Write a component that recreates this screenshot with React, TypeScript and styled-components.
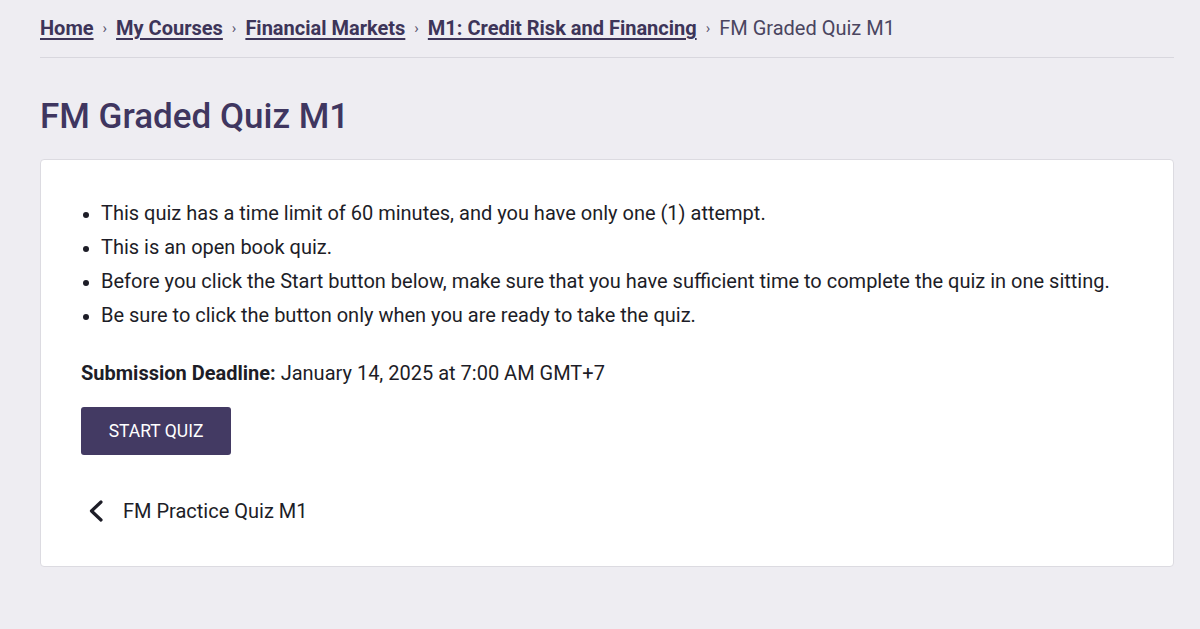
import styled, { createGlobalStyle } from 'styled-components';

const GlobalStyle = createGlobalStyle`
  html, body {
    margin: 0;
    padding: 0;
    background: #eeedf2;
  }
  body {
    font-family: Roboto, "Liberation Sans", sans-serif;
    color: #1d1d27;
  }
`;

const Page = styled.main`
  min-height: 629px;
  padding: 0 26px 0 40px;
  box-sizing: border-box;
`;

const Breadcrumbs = styled.nav`
  display: flex;
  align-items: center;
  gap: 9px;
  height: 58px;
  border-bottom: 1px solid #d8d7de;
  font-size: 20px;
  padding-bottom: 1px;
  box-sizing: border-box;
`;

const Crumb = styled.a`
  color: #3d3559;
  font-weight: 700;
  text-decoration: underline;
  text-decoration-thickness: 2px;
  text-underline-offset: 3px;
`;

const Current = styled.span`
  color: #4a4560;
`;

const Sep = styled.span`
  color: #5b5670;
  font-size: 15px;
`;

const Title = styled.h1`
  margin: 0;
  padding: 38px 0 21px;
  font-size: 35px;
  line-height: 42px;
  font-weight: 500;
  color: #3f3660;
`;

const Card = styled.section`
  background: #fff;
  border: 1px solid #dcdbe1;
  border-radius: 4px;
  padding: 36px 40px 43px;
`;

const Rules = styled.ul`
  margin: 0;
  padding: 0 0 0 20px;
  font-size: 20px;
  line-height: 34px;

  li::marker {
    font-size: 18px;
  }
`;

const Deadline = styled.p`
  margin: 27px 0 0;
  font-size: 20px;
  line-height: 28px;
`;

const StartButton = styled.button`
  margin-top: 20px;
  width: 150px;
  height: 48px;
  border: none;
  border-radius: 3px;
  background: #433a63;
  color: #fff;
  font-family: inherit;
  font-size: 17.5px;
  cursor: pointer;
`;

const BackLink = styled.a`
  display: flex;
  align-items: center;
  gap: 19px;
  margin-top: 44px;
  font-size: 20px;
  line-height: 24px;
  color: #1d1d27;
  padding-left: 6px;
`;

const Chevron = () => (
  <svg width="17" height="24" viewBox="0 0 17 24" fill="none">
    <path
      d="M14 3 L4.5 12 L14 21"
      stroke="#1d1d27"
      strokeWidth="3.2"
      strokeLinecap="round"
      strokeLinejoin="round"
    />
  </svg>
);

export default function App() {
  return (
    <>
      <GlobalStyle />
      <Page>
        <Breadcrumbs>
          <Crumb>Home</Crumb>
          <Sep>›</Sep>
          <Crumb>My Courses</Crumb>
          <Sep>›</Sep>
          <Crumb>Financial Markets</Crumb>
          <Sep>›</Sep>
          <Crumb>M1: Credit Risk and Financing</Crumb>
          <Sep>›</Sep>
          <Current>FM Graded Quiz M1</Current>
        </Breadcrumbs>
        <Title>FM Graded Quiz M1</Title>
        <Card>
          <Rules>
            <li>This quiz has a time limit of 60 minutes, and you have only one (1) attempt.</li>
            <li>This is an open book quiz.</li>
            <li>Before you click the Start button below, make sure that you have sufficient time to complete the quiz in one sitting.</li>
            <li>Be sure to click the button only when you are ready to take the quiz.</li>
          </Rules>
          <Deadline>
            <strong>Submission Deadline:</strong> January 14, 2025 at 7:00 AM GMT+7
          </Deadline>
          <StartButton>START QUIZ</StartButton>
          <BackLink>
            <Chevron />
            FM Practice Quiz M1
          </BackLink>
        </Card>
      </Page>
    </>
  );
}
